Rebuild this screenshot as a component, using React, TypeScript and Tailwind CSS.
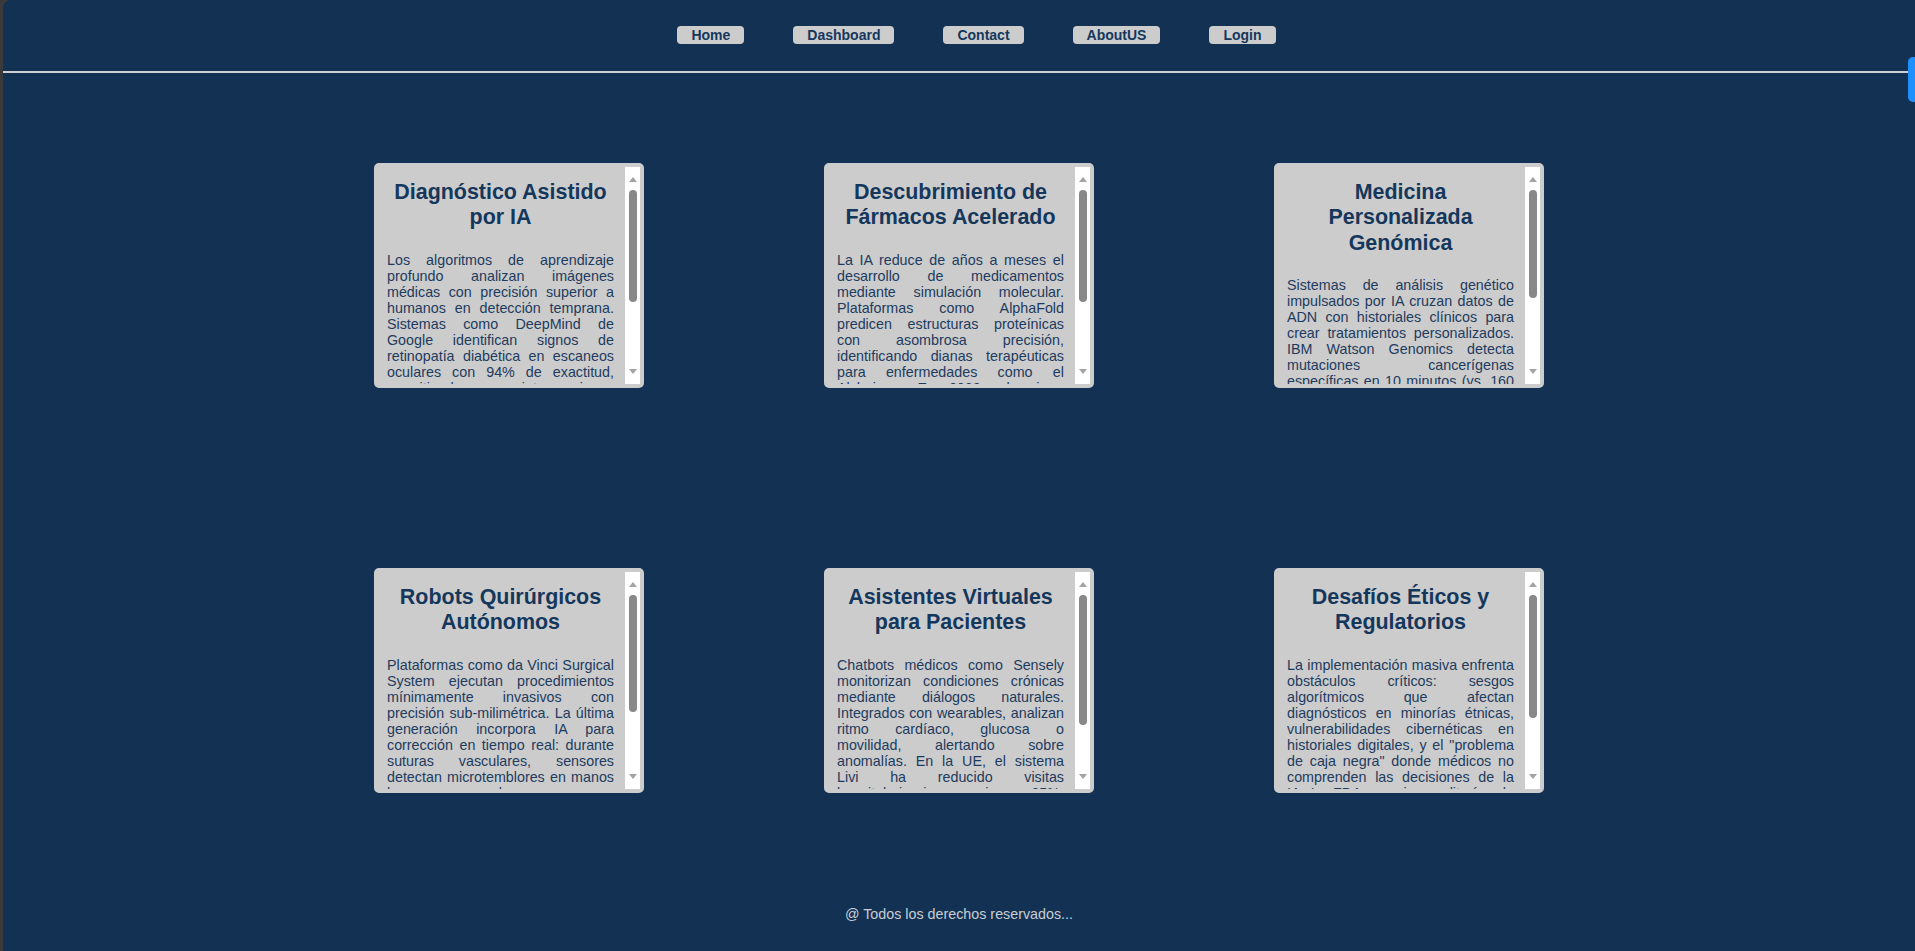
const links = ["Home", "Dashboard", "Contact", "AboutUS", "Login"];

const cards = [
  {
    title: "Diagnóstico Asistido por IA",
    thumb: 112,
    text: "Los algoritmos de aprendizaje profundo analizan imágenes médicas con precisión superior a humanos en detección temprana. Sistemas como DeepMind de Google identifican signos de retinopatía diabética en escaneos oculares con 94% de exactitud, permitiendo intervenciones tempranas que previenen la ceguera. En radiología, modelos entrenados con millones de estudios detectan nódulos pulmonares y fracturas sutiles en segundos, reduciendo los falsos negativos y liberando tiempo de los especialistas para los casos más complejos.",
  },
  {
    title: "Descubrimiento de Fármacos Acelerado",
    thumb: 112,
    text: "La IA reduce de años a meses el desarrollo de medicamentos mediante simulación molecular. Plataformas como AlphaFold predicen estructuras proteínicas con asombrosa precisión, identificando dianas terapéuticas para enfermedades como el Alzheimer. En 2023, el primer fármaco diseñado íntegramente por IA entró en ensayos clínicos de fase II, tras un proceso de descubrimiento que costó una fracción de lo habitual y abrió la puerta a terapias para enfermedades raras.",
  },
  {
    title: "Medicina Personalizada Genómica",
    thumb: 108,
    text: "Sistemas de análisis genético impulsados por IA cruzan datos de ADN con historiales clínicos para crear tratamientos personalizados. IBM Watson Genomics detecta mutaciones cancerígenas específicas en 10 minutos (vs. 160 horas manualmente), sugiriendo terapias dirigidas según el perfil de cada tumor. Esto permite ajustar dosis, anticipar efectos adversos y elegir el fármaco con mayor probabilidad de éxito para cada paciente.",
  },
  {
    title: "Robots Quirúrgicos Autónomos",
    thumb: 117,
    text: "Plataformas como da Vinci Surgical System ejecutan procedimientos mínimamente invasivos con precisión sub-milimétrica. La última generación incorpora IA para corrección en tiempo real: durante suturas vasculares, sensores detectan microtemblores en manos humanas y los compensan automáticamente. El resultado son incisiones más pequeñas, menos sangrado y tiempos de recuperación hasta un 50% menores.",
  },
  {
    title: "Asistentes Virtuales para Pacientes",
    thumb: 130,
    text: "Chatbots médicos como Sensely monitorizan condiciones crónicas mediante diálogos naturales. Integrados con wearables, analizan ritmo cardíaco, glucosa o movilidad, alertando sobre anomalías. En la UE, el sistema Livi ha reducido visitas hospitalarias innecesarias un 35%, mejorando la adherencia a los tratamientos.",
  },
  {
    title: "Desafíos Éticos y Regulatorios",
    thumb: 123,
    text: "La implementación masiva enfrenta obstáculos críticos: sesgos algorítmicos que afectan diagnósticos en minorías étnicas, vulnerabilidades cibernéticas en historiales digitales, y el \"problema de caja negra\" donde médicos no comprenden las decisiones de la IA. La FDA ya exige auditorías de transparencia y la UE prepara normas específicas para su uso clínico.",
  },
];

function Arrow({ down }: { down?: boolean }) {
  return (
    <svg width="8" height="5" viewBox="0 0 8 5" className="shrink-0">
      <path d={down ? "M0 0 H8 L4 5 Z" : "M0 5 H8 L4 0 Z"} fill="#a3a3a3" />
    </svg>
  );
}

function ScrollBar({ thumb }: { thumb: number }) {
  return (
    <div className="flex w-[15px] shrink-0 flex-col items-center bg-white py-[10px]">
      <Arrow />
      <div
        className="mt-[8px] w-[8px] rounded-full bg-[#888888]"
        style={{ height: thumb }}
      />
      <div className="flex-1" />
      <Arrow down />
    </div>
  );
}

export default function App() {
  return (
    <div className="min-h-screen bg-[#3a3a3a] pl-[3px] font-['Liberation_Sans',Arial,sans-serif]">
      <div className="relative flex min-h-screen flex-col rounded-tl-[8px] bg-[#133253]">
        {/* Nav */}
        <header className="flex h-[73px] justify-center gap-[49px] border-b-2 border-[#d0d0d0] pl-[35px] pt-[26px]">
          {links.map((l) => (
            <button
              key={l}
              className="h-[18px] rounded-[4px] bg-[#cccccc] px-[14px] text-[14px] font-bold leading-[18px] text-[#15375c]"
            >
              {l}
            </button>
          ))}
        </header>

        {/* Cards */}
        <main className="grid grid-cols-[270px_270px_270px] justify-center gap-x-[180px] gap-y-[180px] pt-[90px]">
          {cards.map((c) => (
            <div
              key={c.title}
              className="flex h-[225px] w-[270px] rounded-[5px] border-4 border-[#cccccc] bg-[#cccccc]"
            >
              <div className="flex-1 overflow-hidden pl-[9px] pr-[11px] pt-[13px]">
                <h2 className="text-center text-[21.44px] font-bold leading-[25.3px] text-[#15375c]">
                  {c.title}
                </h2>
                <p className="mt-[21px] text-justify text-[14.3px] leading-[16px] text-[#1d3b5e]">
                  {c.text}
                </p>
              </div>
              <ScrollBar thumb={c.thumb} />
            </div>
          ))}
        </main>

        <footer className="mt-[113px] pb-[30px] text-center text-[14.3px] leading-[16px] text-[#c8cdd3]">
          @ Todos los derechos reservados...
        </footer>

        {/* floating side tab */}
        <div className="absolute right-0 top-[57px] h-[45px] w-[7px] rounded-l-[5px] bg-[#1e90ff]" />
      </div>
    </div>
  );
}
